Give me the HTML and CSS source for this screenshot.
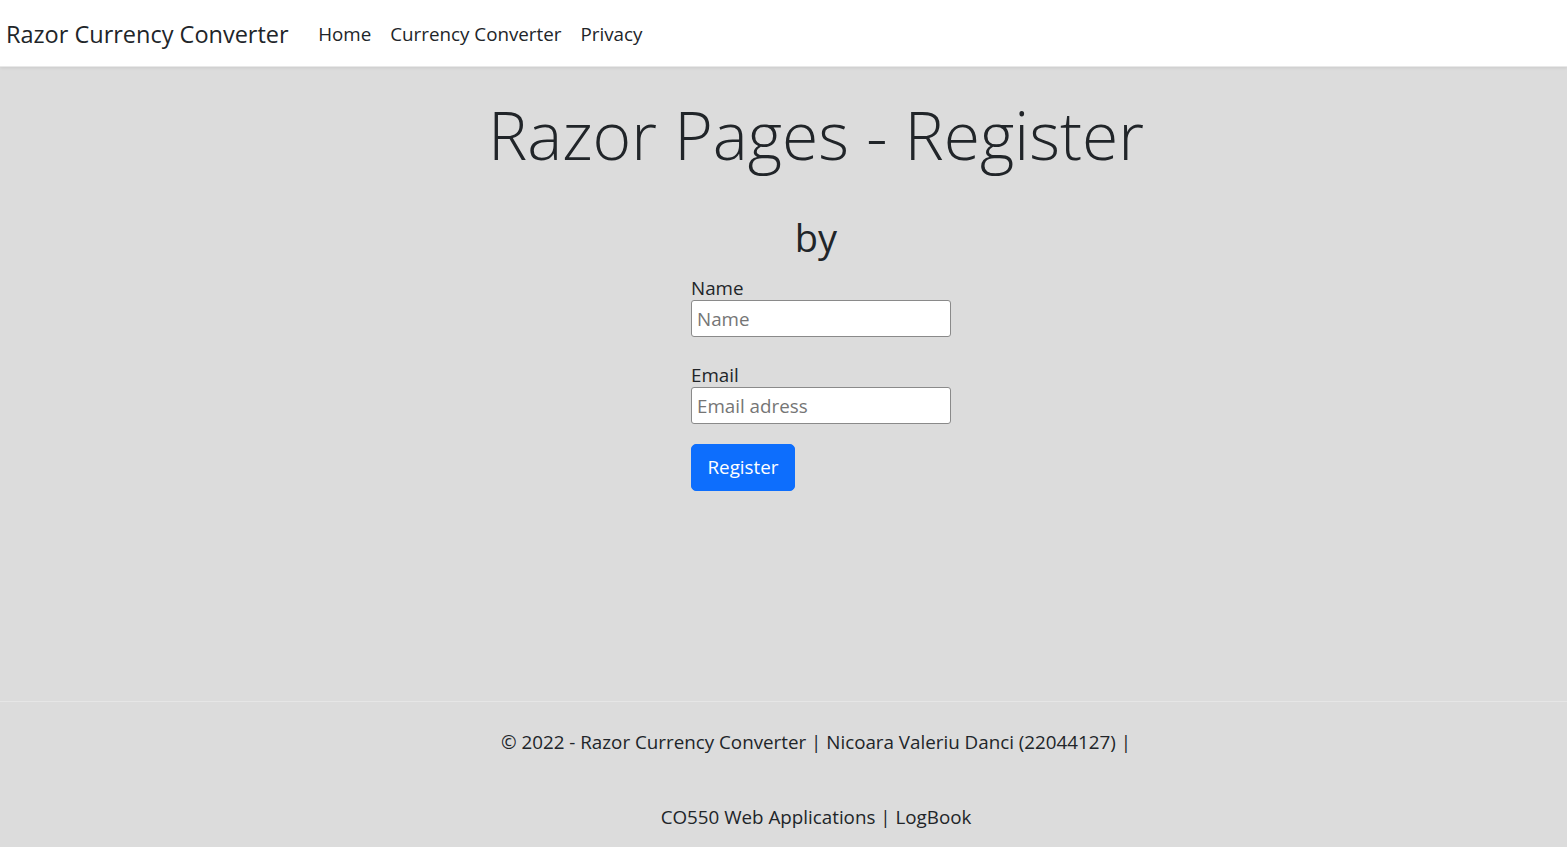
FILE: index.html
```html
<!DOCTYPE html>
<html lang="en">
<head>
<meta charset="utf-8">
<title>Register - Razor Currency Converter</title>
<link rel="stylesheet" href="styles.css">
</head>
<body>
<header class="navbar">
  <a class="brand" href="#">Razor Currency Converter</a>
  <nav class="nav">
    <a class="nav-link" href="#">Home</a>
    <a class="nav-link" href="#">Currency Converter</a>
    <a class="nav-link" href="#">Privacy</a>
  </nav>
</header>
<main class="main">
  <h1 class="title">Razor Pages - Register</h1>
  <h2 class="by">by</h2>
  <form class="form">
    <div class="field">
      <label class="label" for="name">Name</label>
      <input class="input" id="name" type="text" placeholder="Name">
    </div>
    <div class="field">
      <label class="label" for="email">Email</label>
      <input class="input" id="email" type="text" placeholder="Email adress">
    </div>
    <button class="btn" type="button">Register</button>
  </form>
</main>
<footer class="footer">
  <p class="footer-line">© 2022 - Razor Currency Converter | Nicoara Valeriu Danci (22044127) |</p>
  <p class="footer-line">CO550 Web Applications | LogBook</p>
</footer>
</body>
</html>
```
FILE: styles.css
```css
* { box-sizing: border-box; }
html, body { margin: 0; padding: 0; }
body {
  font-family: "Open Sans", "Noto Sans", sans-serif;
  font-size: 18.8px;
  color: #212529;
  background: #dcdcdc;
  width: 1567px;
  height: 847px;
  overflow: hidden;
  display: flex;
  flex-direction: column;
}
.navbar {
  height: 67px;
  background: #fff;
  display: flex;
  align-items: center;
  padding-left: 6px;
  padding-top: 2px;
  box-shadow: 0 1px 3px rgba(0,0,0,0.08);
  border-bottom: 1px solid #e8e8e8;
  position: relative;
  z-index: 1;
}
.brand {
  font-size: 23.5px;
  color: #212529;
  text-decoration: none;
  margin-right: 20px;
  padding-bottom: 1px;
}
.nav { display: flex; gap: 0; }
.nav-link {
  color: #212529;
  text-decoration: none;
  padding: 0 9.5px;
}
.main {
  flex: 1;
  display: flex;
  flex-direction: column;
  align-items: center;
  padding-left: 65px;
}
.title {
  font-size: 66px;
  font-weight: 300;
  line-height: 1.2;
  margin: 28px 0 0;
}
.by {
  font-size: 38px;
  font-weight: 400;
  line-height: 1.2;
  margin: 41px 0 0;
}
.form {
  width: 250px;
  display: flex;
  flex-direction: column;
  align-items: flex-start;
  margin-top: 15px;
}
.field {
  display: flex;
  flex-direction: column;
  margin-bottom: 26px;
}
.label {
  line-height: 24px;
  margin-bottom: 0;
}
.input {
  width: 260px;
  height: 37px;
  border: 1px solid #8a8a8a;
  border-radius: 3px;
  background: #fff;
  padding: 1px 5px 0;
  font-family: inherit;
  font-size: 18.8px;
  color: #212529;
}
.input::placeholder { color: #757575; }
.btn {
  margin-top: -6px;
  height: 47px;
  padding: 0 15.5px;
  background: #0d6efd;
  color: #fff;
  border: 1px solid #0d6efd;
  border-radius: 5px;
  font-family: inherit;
  font-size: 18.8px;
}
.footer {
  height: 146px;
  border-top: 1px solid #e6e6e6;
  padding-left: 65px;
  text-align: center;
  padding-top: 26px;
}
.footer-line {
  margin: 0;
  line-height: 28px;
}
.footer-line + .footer-line { margin-top: 47px; }
```
